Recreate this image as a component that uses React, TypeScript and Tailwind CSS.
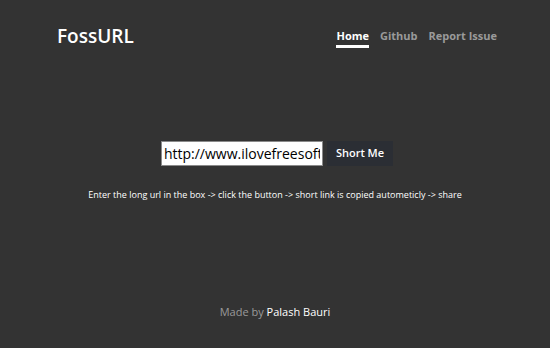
export default function App() {
  return (
    <div className="min-h-[348px] bg-[#333333] flex flex-col font-['Open_Sans',sans-serif]">
      <header className="flex items-center justify-between pl-[57px] pr-[53px] pt-[22px]">
        <h1 className="text-[19px] font-semibold text-white leading-[28px]">FossURL</h1>
        <nav className="flex items-center gap-[11px] text-[11px] font-bold">
          <a className="text-white border-b-[3px] border-white pb-[1px] pt-[4px]">Home</a>
          <a className="text-[#9a9a9a] pt-[4px] pb-[4px]">Github</a>
          <a className="text-[#9a9a9a] pt-[4px] pb-[4px]">Report Issue</a>
        </nav>
      </header>

      <main className="flex flex-col items-center mt-[91px]">
        <div className="flex items-center gap-[4px] pl-[4px]">
          <input
            readOnly
            value="http://www.ilovefreesoftware.com"
            className="w-[162px] h-[25px] bg-white border border-[#8a8a8a] px-[2px] text-[14px] text-black outline-none font-['Open_Sans',sans-serif]"
          />
          <button className="h-[25px] px-[9px] bg-[#2b2e34] text-white text-[11px] font-semibold">
            Short Me
          </button>
        </div>
        <p className="mt-[22px] text-[9px] text-white">
          Enter the long url in the box -&gt; click the button -&gt; short link is copied autometicly -&gt; share
        </p>
      </main>

      <footer className="mt-auto pb-[28px] text-center text-[11px]">
        <span className="text-[#9a9a9a]">Made by </span>
        <span className="text-white">Palash Bauri</span>
      </footer>
    </div>
  );
}
